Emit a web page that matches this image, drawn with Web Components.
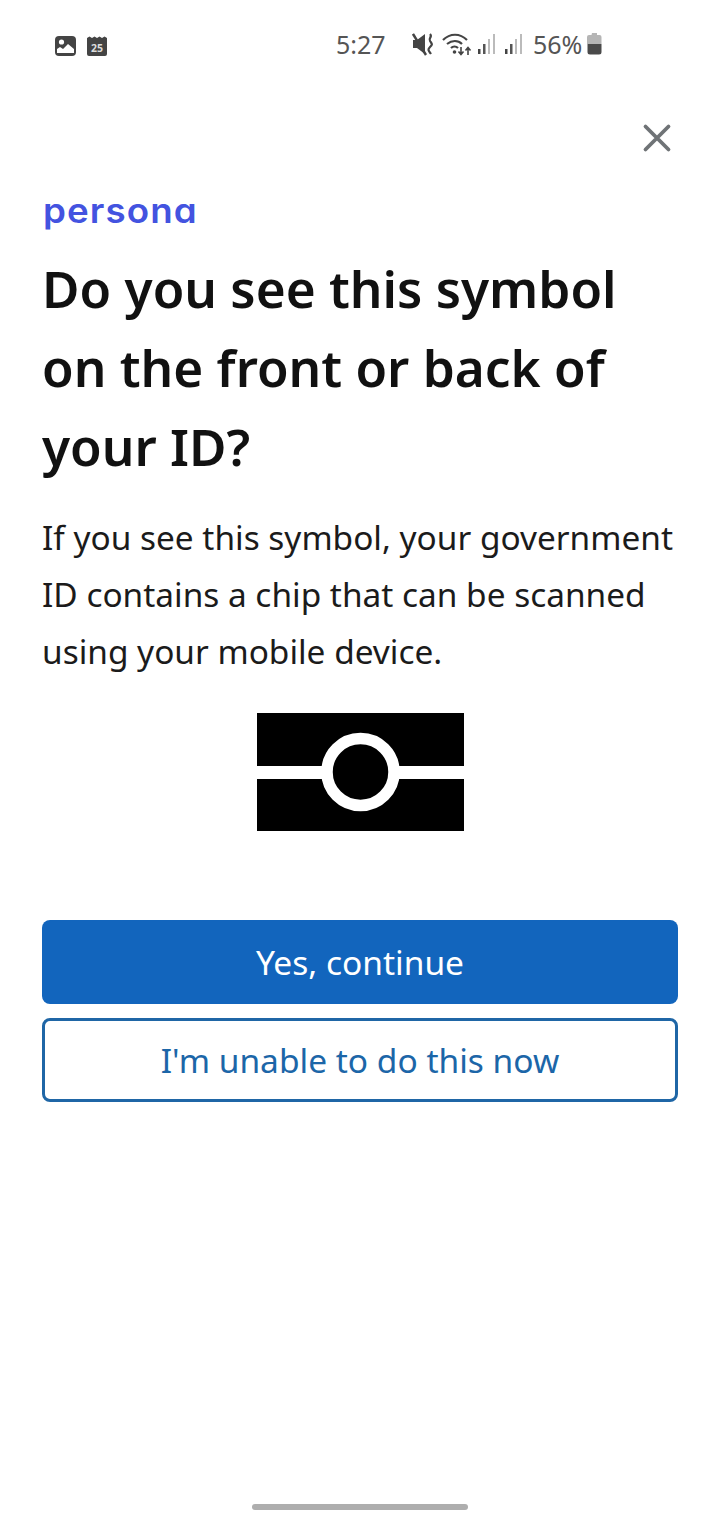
<!DOCTYPE html>
<html>
<head>
<meta charset="utf-8">
<style>
  html, body { margin: 0; background: #fff; }
  body { font-family: "Noto Sans", sans-serif; width: 720px; height: 1520px; overflow: hidden; }
  id-screen { height: 1520px; }
</style>
</head>
<body>
<id-screen>
  <status-bar slot="status"></status-bar>
  <close-row></close-row>
  <persona-logo></persona-logo>
  <h-title>Do you see this symbol on the front or back of your ID?</h-title>
  <body-text>If you see this symbol, your government ID contains a chip that can be scanned using your mobile device.</body-text>
  <chip-symbol></chip-symbol>
  <action-button kind="primary">Yes, continue</action-button>
  <action-button kind="outline">I'm unable to do this now</action-button>
</id-screen>
<script>
class IdScreen extends HTMLElement {
  connectedCallback() {
    this.attachShadow({ mode: 'open' });
    this.shadowRoot.innerHTML = `
      <style>
        :host { display: flex; flex-direction: column; position: relative; box-sizing: border-box; }
        .top { height: 91px; }
        .main { display: flex; flex-direction: column; padding: 0 42px; }
        .bar { position: absolute; left: 252px; bottom: 10px; width: 216px; height: 6px; border-radius: 3px; background: #aeaeae; }
      </style>
      <div class="top"><slot name="status"></slot></div>
      <div class="main"><slot></slot></div>
      <div class="bar"></div>
    `;
  }
}
class StatusBar extends HTMLElement {
  connectedCallback() {
    this.attachShadow({ mode: 'open' });
    this.shadowRoot.innerHTML = `
      <style>
        :host { display: flex; align-items: center; height: 91px; color: #555; font-family: "Noto Sans", sans-serif; font-size: 25px; }
        .left { display: flex; gap: 11px; margin-left: 55px; width: 281px; }
        .time { width: 76px; margin-bottom: 4px; }
        .right { display: flex; align-items: center; margin-bottom: 3px; }
        svg { display: block; }
      </style>
      <div class="left">
        <svg width="21" height="20" viewBox="0 0 21 20"><rect width="21" height="20" rx="4" fill="#444"/><circle cx="6.500" cy="6" r="2.600" fill="#fff"/><path d="M2 17v-4l3-2 3 2 5-5 6 5v4z" fill="#fff"/></svg>
        <svg width="20" height="20" viewBox="0 0 20 20"><path d="M0 2l2.500-1.500 2.500 1.500 2.500-1.500 2.500 1.500 2.500-1.500 2.500 1.500 2.500-1.500 2.500 1.500v16a2 2 0 0 1-2 2h-16a2 2 0 0 1-2-2z" fill="#444"/><text x="10" y="15.500" text-anchor="middle" font-family="Noto Sans" font-weight="700" font-size="10.500" fill="#ddd">25</text></svg>
      </div>
      <div class="time">5:27</div>
      <div class="right">
        <svg width="22" height="26" viewBox="0 0 22 26" style="margin-right:8px"><path d="M1 9h4l8-6v20l-8-6h-4z" fill="#444"/><path d="M1 3l13 21" stroke="#444" stroke-width="2.400"/><path d="M18 3c3 3-2 4 0 7s3 3 0 6 -1 4 1 7" fill="none" stroke="#444" stroke-width="2.200"/></svg>
        <svg width="30" height="26" viewBox="0 0 30 26" style="margin-right:6px"><g fill="none" stroke="#444" stroke-width="2.200"><path d="M1 9c7-7 17-7 24 0"/><path d="M5 13c5-4 11-4 15 0"/><path d="M9 17c2-2 5-2 7 0"/></g><circle cx="12.500" cy="21" r="1.800" fill="#444"/><path d="M19 16v7m-2.500-2.500l2.500 3 2.500-3M26 24v-7m-2.500 2.500l2.500-3 2.500 3" stroke="#444" stroke-width="1.600" fill="none"/></svg>
        <signal-bars></signal-bars>
        <signal-bars style="margin-left:9px"></signal-bars>
        <span style="margin-left:10px">56%</span>
        <svg width="15" height="22" viewBox="0 0 15 22" style="margin-left:5px"><path d="M5 0h5v2h2.500a2 2 0 0 1 2 2v7h-14.500v-7a2 2 0 0 1 2-2h2.500z" fill="#b5b5b5"/><path d="M0.500 11h14v8a2.500 2.500 0 0 1-2.500 2.500h-9a2.500 2.500 0 0 1-2.500-2.500z" fill="#4a4a4a"/></svg>
      </div>
    `;
  }
}
class SignalBars extends HTMLElement {
  connectedCallback() {
    this.attachShadow({ mode: 'open' });
    this.shadowRoot.innerHTML = `
      <style>:host { display: block; } svg { display: block; }</style>
      <svg width="18" height="20" viewBox="0 0 18 20">
        <rect x="0" y="15" width="2.500" height="5" fill="#444"/>
        <rect x="5" y="10" width="2.500" height="10" fill="#555"/>
        <rect x="10" y="5" width="2" height="15" fill="#bbb"/>
        <rect x="15" y="0" width="2" height="20" fill="#bbb"/>
      </svg>
    `;
  }
}
class CloseRow extends HTMLElement {
  connectedCallback() {
    this.attachShadow({ mode: 'open' });
    this.shadowRoot.innerHTML = `
      <style>
        :host { display: flex; justify-content: flex-end; height: 96px; padding-right: 6px; padding-top: 32px; box-sizing: border-box; }
        svg { display: block; }
      </style>
      <svg width="30" height="30" viewBox="0 0 30 30"><path d="M3.500 3.500l23 23M26.500 3.500l-23 23" stroke="#6f7376" stroke-width="3.800" stroke-linecap="round"/></svg>
    `;
  }
}
class PersonaLogo extends HTMLElement {
  connectedCallback() {
    this.attachShadow({ mode: 'open' });
    this.shadowRoot.innerHTML = `
      <style>
        :host { display: block; height: 48px; }
        .word { display: inline-block; color: #4353e0; font-family: "Inter", sans-serif; font-feature-settings: "cv11" 1; font-weight: 600; font-size: 34px; letter-spacing: 1px; line-height: 48px; transform-origin: left center; transform: translateX(1px) scaleX(1.080); }
      </style>
      <span class="word">persona</span>
    `;
  }
}
class HTitle extends HTMLElement {
  connectedCallback() {
    this.attachShadow({ mode: 'open' });
    this.shadowRoot.innerHTML = `
      <style>
        :host { display: block; color: #111; font-family: "Noto Sans", sans-serif; font-weight: 600; font-size: 51.300px; line-height: 79px; margin-top: 14px; }
      </style>
      <slot></slot>
    `;
  }
}
class BodyText extends HTMLElement {
  connectedCallback() {
    this.attachShadow({ mode: 'open' });
    this.shadowRoot.innerHTML = `
      <style>
        :host { display: block; color: #1b1b1b; font-family: "Noto Sans", sans-serif; font-size: 33.400px; line-height: 57px; margin-top: 23px; }
      </style>
      <slot></slot>
    `;
  }
}
class ChipSymbol extends HTMLElement {
  connectedCallback() {
    this.attachShadow({ mode: 'open' });
    this.shadowRoot.innerHTML = `
      <style>
        :host { display: flex; justify-content: center; margin-top: 33px; margin-bottom: 89px; }
        svg { display: block; }
      </style>
      <svg width="207" height="118" viewBox="0 0 207 118">
        <rect width="207" height="118" fill="#000"/>
        <rect y="53" width="207" height="13" fill="#fff"/>
        <circle cx="103.500" cy="59" r="33.500" fill="#000" stroke="#fff" stroke-width="11.500"/>
      </svg>
    `;
  }
}
class ActionButton extends HTMLElement {
  connectedCallback() {
    const primary = this.getAttribute('kind') === 'primary';
    this.attachShadow({ mode: 'open' });
    this.shadowRoot.innerHTML = `
      <style>
        :host { display: flex; align-items: center; justify-content: center; box-sizing: border-box; height: 84px; border-radius: 8px; font-family: "Noto Sans", sans-serif; font-size: 33.500px; margin-bottom: 14px;
          ${primary ? 'background: #1265bd; color: #fff;' : 'background: #fff; color: #1c66a8; border: 3px solid #1f66a6;'} }
      </style>
      <slot></slot>
    `;
  }
}
customElements.define('id-screen', IdScreen);
customElements.define('status-bar', StatusBar);
customElements.define('signal-bars', SignalBars);
customElements.define('close-row', CloseRow);
customElements.define('persona-logo', PersonaLogo);
customElements.define('h-title', HTitle);
customElements.define('body-text', BodyText);
customElements.define('chip-symbol', ChipSymbol);
customElements.define('action-button', ActionButton);
</script>
</body>
</html>
